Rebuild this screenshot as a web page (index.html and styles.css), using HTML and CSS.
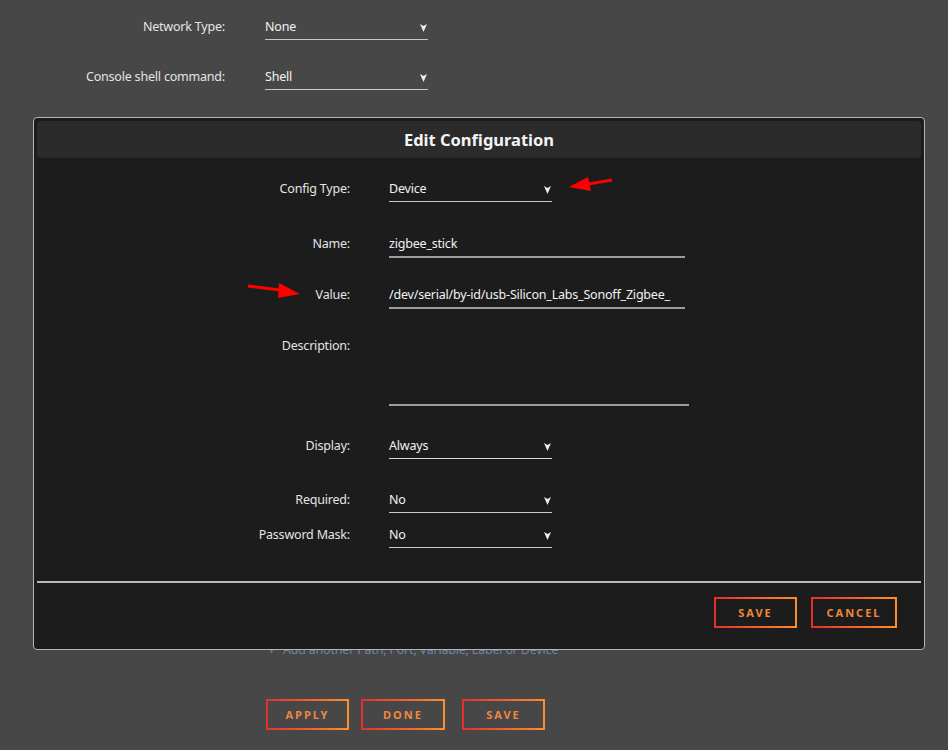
FILE: index.html
```html
<!DOCTYPE html>
<html>
  <head>
    <meta charset="utf-8" />
    <meta name="viewport" content="width=device-width, initial-scale=1" />
    <link rel="stylesheet" href="styles.css">
  </head>

  <body>
    <div class="settings">
      <div class="row">
        <label>Network Type:</label>
        <div class="field select">None<svg class="caret" width="7" height="8" viewBox="0 0 7 8"><polygon points="0,0 3.5,2 7,0 3.5,8" /></svg></div>
      </div>
      <div class="row">
        <label>Console shell command:</label>
        <div class="field select">Shell<svg class="caret" width="7" height="8" viewBox="0 0 7 8"><polygon points="0,0 3.5,2 7,0 3.5,8" /></svg></div>
      </div>
    </div>

    <div class="add-link"><span class="plus">+</span>Add another Path, Port, Variable, Label or Device</div>

    <div class="actions">
      <button class="btn apply">Apply</button>
      <button class="btn done">Done</button>
      <button class="btn save">Save</button>
    </div>

    <div class="modal">
      <div class="modal-head">Edit Configuration</div>
      <div class="modal-body">
        <div class="mrow">
          <label>Config Type:</label>
          <div class="field select short">Device<svg class="caret" width="7" height="8" viewBox="0 0 7 8"><polygon points="0,0 3.5,2 7,0 3.5,8" /></svg></div>
        </div>
        <div class="mrow name">
          <label>Name:</label>
          <div class="field text">zigbee_stick</div>
        </div>
        <div class="mrow value">
          <label>Value:</label>
          <div class="field text clip">/dev/serial/by-id/usb-Silicon_Labs_Sonoff_Zigbee_</div>
        </div>
        <div class="mrow desc">
          <label>Description:</label>
          <div class="field area"></div>
        </div>
        <div class="mrow display">
          <label>Display:</label>
          <div class="field select short thin">Always<svg class="caret" width="7" height="8" viewBox="0 0 7 8"><polygon points="0,0 3.5,2 7,0 3.5,8" /></svg></div>
        </div>
        <div class="mrow required">
          <label>Required:</label>
          <div class="field select short">No<svg class="caret" width="7" height="8" viewBox="0 0 7 8"><polygon points="0,0 3.5,2 7,0 3.5,8" /></svg></div>
        </div>
        <div class="mrow mask">
          <label>Password Mask:</label>
          <div class="field select short">No<svg class="caret" width="7" height="8" viewBox="0 0 7 8"><polygon points="0,0 3.5,2 7,0 3.5,8" /></svg></div>
        </div>
      </div>
      <hr class="sep">
      <div class="modal-foot">
        <button class="btn ok">Save</button>
        <button class="btn cancel">Cancel</button>
      </div>
    </div>

    <svg class="arrows" width="948" height="750" viewBox="0 0 948 750">
      <line x1="612" y1="180" x2="585" y2="184.5" stroke="#f00" stroke-width="3"/>
      <polygon points="569,187 588,177 591,191" fill="#f00"/>
      <line x1="248" y1="286" x2="284" y2="290.5" stroke="#f00" stroke-width="3"/>
      <polygon points="300,294 279,283 278,298" fill="#f00"/>
    </svg>
  </body>
</html>
```

FILE: styles.css
```css
body {
  margin: 0;
  background: #474747;
  color: #e4e4e4;
  font-family: "Noto Sans", Arial, sans-serif;
  font-size: 12.5px;
  letter-spacing: -0.2px;
  position: relative;
  height: 750px;
  overflow: hidden;
}
.settings {
  padding-top: 13px;
}
.row {
  display: grid;
  grid-template-columns: 225px 163px;
  column-gap: 40px;
  height: 50px;
}
label {
  text-align: right;
  line-height: 28px;
  height: 26px;
}
.field {
  position: relative;
  line-height: 28px;
  height: 26px;
  color: #f2f2f2;
  border-bottom: 1px solid #c8c8c8;
}
.caret {
  position: absolute;
  right: 1px;
  top: 11px;
  fill: #eee;
}
.add-link {
  margin: 528px 0 0 268px;
  color: #7083ad;
  font-size: 12.5px;
}
.plus {
  font-weight: bold;
  margin-right: 8px;
}
.actions {
  display: flex;
  gap: 12px;
  margin: 41px 0 0 266px;
}
.btn {
  background: none;
  border: 2px solid;
  border-image: linear-gradient(to right, #e4302e, #ff8d2c) 1;
  color: #f0883c;
  font-family: inherit;
  font-weight: bold;
  font-size: 11px;
  letter-spacing: 2px;
  text-transform: uppercase;
  height: 31px;
  padding: 0;
}
.apply { width: 83px; }
.done { width: 84px; }
.save { width: 83px; margin-left: 5px; }
.modal {
  position: absolute;
  left: 33px;
  top: 117px;
  width: 890px;
  height: 531px;
  background: #1c1c1c;
  border: 1px solid #b4b4b4;
  border-radius: 4px;
  z-index: 2;
}
.modal-head {
  margin: 3px 3px 0;
  height: 37px;
  line-height: 37px;
  background: #2b2b2b;
  border-radius: 4px;
  text-align: center;
  font-size: 16.5px;
  font-weight: bold;
  letter-spacing: 0;
  color: #f4f4f4;
}
.modal-body {
  padding-top: 17px;
}
.mrow {
  display: grid;
  grid-template-columns: 316px 300px;
  column-gap: 39px;
}
.field.short {
  width: 163px;
}
.field.text {
  width: 296px;
  border-bottom: 2px solid #9c9c9c;
}
.field.clip {
  white-space: nowrap;
  overflow: hidden;
}
.field.area {
  height: 72px;
  width: 300px;
  border-bottom: 2px solid #9c9c9c;
}
.field.thin {
  border-bottom: 1px solid #d8d8d8;
}
.name { margin-top: 28px; }
.value { margin-top: 23px; }
.desc { margin-top: 23px; }
.display { margin-top: 26px; }
.required { margin-top: 27px; }
.mask { margin-top: 8px; }
.sep {
  margin: 33px 3px 0;
  border: 0;
  border-top: 2px solid #b8b8b8;
}
.modal-foot {
  display: flex;
  justify-content: flex-end;
  gap: 14px;
  margin: 14px 27px 0 0;
}
.ok { width: 83px; }
.cancel { width: 86px; }
.arrows {
  position: absolute;
  left: 0;
  top: 0;
  z-index: 3;
  pointer-events: none;
}
```
